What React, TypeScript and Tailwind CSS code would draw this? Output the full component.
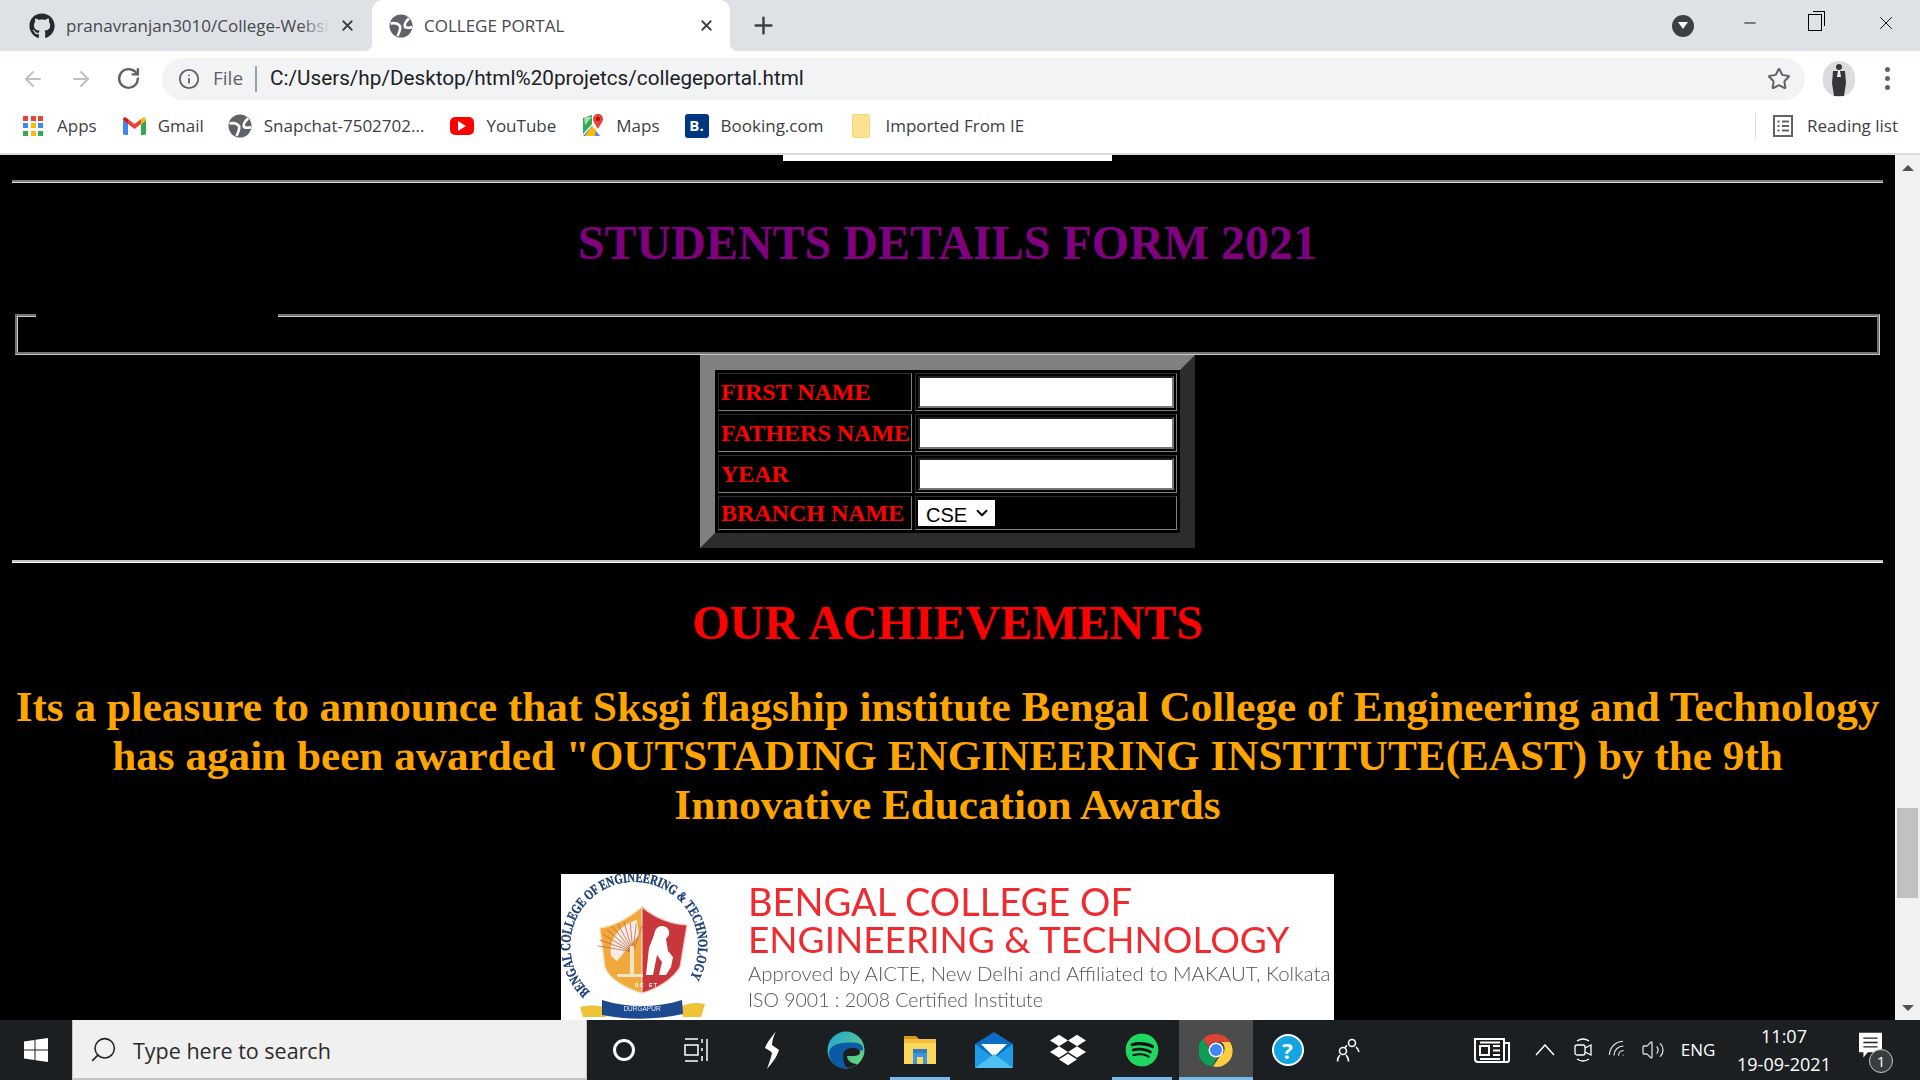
import { ArrowLeft, ArrowRight, ChevronDown, Info, Minus, Plus, RotateCw, Search, Star, Volume2, Wifi, X } from "lucide-react";
import { FaDropbox, FaGithub, FaSpotify } from "react-icons/fa";

function Globe({ size = 24 }: { size?: number }) {
  return (
    <svg width={size} height={size} viewBox="0 0 24 24" className="shrink-0">
      <circle cx="12" cy="12" r="11.500" fill="#5f6368" />
      <path d="M1.500 9.500C6 8.500 9 9.500 11 12c1 3-.5 6-2.500 10" fill="none" stroke="#fff" strokeWidth="2.600" />
      <path d="M20 4.500c-3 3-5 5-4 8.500 2 1 4.500 1 7 0" fill="none" stroke="#fff" strokeWidth="2.600" />
    </svg>
  );
}

function AppsIcon() {
  const colors = ["#ea4335", "#ea4335", "#ea4335", "#4285f4", "#fbbc05", "#4285f4", "#34a853", "#fbbc05", "#34a853"];
  return (
    <div className="grid grid-cols-3 gap-[2.5px] w-[20px] h-[20px] shrink-0">
      {colors.map((c, i) => (
        <span key={i} style={{ background: c }} />
      ))}
    </div>
  );
}

function GmailIcon() {
  return (
    <svg width="23" height="18" viewBox="0 0 23 18" className="shrink-0">
      <path d="M0 3v13c0 1 .7 2 2 2h3V7z" fill="#4285f4" />
      <path d="M23 3v13c0 1-.7 2-2 2h-3V7z" fill="#34a853" />
      <path d="M18 2v5l-6.500 5L5 7V2l6.500 5z" fill="#ea4335" />
      <path d="M0 3l5 4V2L3 .5C1.500-.5 0 .8 0 3z" fill="#c5221f" />
      <path d="M23 3l-5 4V2l2-1.500C21.500-.5 23 .8 23 3z" fill="#fbbc05" />
    </svg>
  );
}

function MapsIcon() {
  return (
    <svg width="22" height="24" viewBox="0 0 22 24" className="shrink-0">
      <path d="M1 4l9-3v9L1 20z" fill="#34a853" />
      <path d="M1 22l9-10 8 10z" fill="#4285f4" />
      <path d="M10 12l4 4-1 6H3z" fill="#fbbc05" />
      <path d="M2 3h8L3 11z" fill="#a8dab5" />
      <path d="M16 0c3 0 5 2 5 5 0 3-3 6-5 10-2-4-5-7-5-10 0-3 2-5 5-5z" fill="#ea4335" />
      <circle cx="16" cy="5" r="2" fill="#a50e0e" />
    </svg>
  );
}

function ChromeLogo() {
  return (
    <svg width="34" height="34" viewBox="0 0 34 34">
      <path d="M17 1a16 16 0 0 1 14 8H17a8 8 0 0 0-7.500 5L4 6A16 16 0 0 1 17 1z" fill="#db4437" />
      <path d="M4 6l7 12a7 7 0 0 0 7 6l-5 9.500A16 16 0 0 1 4 6z" fill="#0f9d58" />
      <path d="M31 9a16 16 0 0 1-17 24.500L21 23a8 8 0 0 0 1-14z" fill="#ffcd40" />
      <circle cx="17" cy="17" r="7.500" fill="#fff" />
      <circle cx="17" cy="17" r="6" fill="#4285f4" />
    </svg>
  );
}

function EdgeLogo() {
  return (
    <svg width="38" height="38" viewBox="0 0 38 38">
      <defs>
        <linearGradient id="edgeTop" x1="0" y1="0" x2="1" y2="1">
          <stop offset="0" stopColor="#1fa2d8" />
          <stop offset="1" stopColor="#6fdc6a" />
        </linearGradient>
      </defs>
      <circle cx="19" cy="19" r="18.500" fill="url(#edgeTop)" />
      <path d="M2 21c0 9 7 16.500 16 16.500 5 0 9-1.500 12-4-6 2-14-1-14-9 0-3 2-5 5-5h15c1-5-3-8-10-8C13 11.500 4 13 2 21z" fill="#0c59a4" />
      <path d="M16 24c0-4 4-7 9-7 5 0 8 2 8 4 0 3-3 4-7 4h-6c0 4 4 8 10 8-3 3-7 4.500-11 3-2-3-3-7-3-12z" fill="#1b1d1f" />
    </svg>
  );
}

function ExplorerIcon() {
  return (
    <svg width="32" height="32" viewBox="0 0 32 32">
      <path d="M0 2h12l3 3H0z" fill="#d99a1c" />
      <rect x="0" y="5" width="32" height="25" fill="#fbd75b" />
      <rect x="0" y="5" width="32" height="4" fill="#f5bd3c" />
      <rect x="9" y="17" width="14" height="13" fill="#3a96dd" />
      <rect x="13" y="23" width="6" height="7" fill="#fbd75b" />
      <rect x="9" y="15" width="14" height="4" fill="#2b7cc0" />
    </svg>
  );
}

function MailIcon() {
  return (
    <svg width="38" height="36" viewBox="0 0 38 36">
      <path d="M0 12L19 0l19 12v24H0z" fill="#0a6cc4" />
      <path d="M6 12h26L19 25z" fill="#fff" />
      <path d="M0 12l19 14 19-14v24H0z" fill="#1e9de6" />
      <path d="M0 36l19-14 19 14z" fill="#4fc0f2" />
    </svg>
  );
}

function ShieldCrest() {
  const rays = [-78, -66, -54, -42, -30, -18, -6, 6, 18, 30];
  return (
    <svg width="187" height="146" viewBox="0 0 187 146" className="shrink-0">
      <defs>
        <path id="ringPath" d="M29 118A64 64 0 1 1 128 105" />
      </defs>
      <text fontFamily="Liberation Serif, serif" fontWeight="bold" fontSize="14" fill="#1d3f77" stroke="#1d3f77" strokeWidth="0.400">
        <textPath href="#ringPath" textLength="285" lengthAdjust="spacingAndGlyphs">BENGAL COLLEGE OF ENGINEERING &amp; TECHNOLOGY</textPath>
      </text>
      <path d="M81 33C68 44 54 52 39 54l5 39c4 12 22 22 37 26z" fill="#f0a93a" stroke="#f8d9a8" strokeWidth="1.200" />
      <path d="M81 33c13 11 29 17 45 18l-7 42c-7 12-23 22-38 26z" fill="#c8373c" stroke="#f3c7b8" strokeWidth="1.200" />
      <path d="M76 46C60 50 47 64 50 82l6 5 22-26z" fill="#f8ece4" />
      {rays.map((a) => (
        <line key={a} x1="72" y1="78" x2={72 + 30 * Math.sin((a * Math.PI) / 180) - 6} y2={78 - 30 * Math.cos((a * Math.PI) / 180)} stroke="#c9654a" strokeWidth="0.800" />
      ))}
      <rect x="69" y="72" width="4" height="28" fill="#f2e6c8" />
      <path d="M56 100h26v3H56z" fill="#f2e6c8" />
      <path d="M101 52c5 0 8 4 7 9l-3 4 2 12 5 6-2 10-5 8h-7l3-13-5-7-4 20h-7l3-27 5-13c1-6 4-9 8-9z" fill="#fff" />
      <text x="74" y="113" fontFamily="Liberation Sans, sans-serif" fontSize="5" fontWeight="bold" fill="#fff">B C</text>
      <text x="88" y="113" fontFamily="Liberation Sans, sans-serif" fontSize="5" fontWeight="bold" fill="#fff">E T</text>
      <path d="M19 133c8-2 15-2 24 0l2 10H22z" fill="#f0c235" />
      <path d="M120 132c8-3 16-4 24-2l-4 13h-18z" fill="#f0c235" />
      <path d="M41 126c26 8 54 8 80 0l1 14c-26 6-56 6-81 1z" fill="#1d4a8e" />
      <text x="81" y="137" textAnchor="middle" fontFamily="Liberation Sans, sans-serif" fontSize="6.500" fill="#e8eefb">DURGAPUR</text>
    </svg>
  );
}

function Tray({ w, children }: { w: string; children: React.ReactNode }) {
  return <div className={`flex items-center justify-center h-full ${w}`}>{children}</div>;
}

function TaskCell({ children, active, line }: { children: React.ReactNode; active?: boolean; line?: boolean }) {
  return (
    <div className={`relative flex items-center justify-center w-[74px] h-full ${active ? "bg-[#4c4c4c]" : ""}`}>
      {children}
      {line && <span className={`absolute bottom-0 h-[3px] bg-[#76b9ed] ${active ? "inset-x-0" : "inset-x-[7px]"}`} />}
    </div>
  );
}

function BrowserChrome() {
  return (
    <div className="shrink-0 font-['Open_Sans',sans-serif] text-[#3c4043]">
      {/* tabs */}
      <div className="flex items-end h-[51px] bg-[#dee1e6]">
        <div className="flex items-center w-[372px] h-[51px] pl-[29px]">
          <FaGithub className="w-[26px] h-[26px] text-[#24292e] shrink-0" />
          <div className="relative w-[264px] ml-[11px] overflow-hidden whitespace-nowrap text-[17px] text-[#45494e]">
            pranavranjan3010/College-Websi
            <span className="absolute inset-y-0 right-0 w-[30px] bg-gradient-to-r from-transparent to-[#dee1e6]" />
          </div>
          <X className="w-[17px] h-[17px] ml-[9px] text-[#3c4043]" strokeWidth={2.500} />
        </div>
        <div className="relative flex items-center w-[358px] h-[51px] pl-[17px] bg-white rounded-t-[11px]">
          <span className="absolute bottom-0 -left-[8px] w-[8px] h-[8px] bg-[radial-gradient(circle_at_0_0,#dee1e6_8px,#ffffff_8.500px)]" />
          <span className="absolute bottom-0 -right-[8px] w-[8px] h-[8px] bg-[radial-gradient(circle_at_100%_0,#dee1e6_8px,#ffffff_8.500px)]" />
          <Globe />
          <span className="ml-[11px] text-[17px] text-[#45494e]">COLLEGE PORTAL</span>
          <X className="ml-auto mr-[15px] w-[17px] h-[17px] text-[#3c4043]" strokeWidth={2.500} />
        </div>
        <div className="flex items-center h-[51px] ml-[20px]">
          <Plus className="w-[27px] h-[27px] text-[#3c4043]" strokeWidth={2.200} />
        </div>
        <div className="flex items-center ml-auto h-[51px]">
          <div className="flex items-center justify-center w-[22px] h-[22px] rounded-full bg-[#3c4043]">
            <span className="w-0 h-0 border-x-[5px] border-x-transparent border-t-[7px] border-t-white" />
          </div>
          <div className="flex items-center justify-center w-[68px] ml-[22px] -mt-[6px]">
            <Minus className="w-[18px] h-[18px] text-black" strokeWidth={1.200} />
          </div>
          <div className="flex items-center justify-center w-[68px] -mt-[6px]">
            <div className="relative w-[14px] h-[17px] -ml-[6px] border border-black">
              <span className="absolute -top-[4px] -right-[4px] w-[12px] h-[15px] border-t border-r border-black" />
            </div>
          </div>
          <div className="flex items-center justify-center w-[68px] -mt-[6px]">
            <X className="w-[22px] h-[22px] text-black" strokeWidth={1} />
          </div>
        </div>
      </div>
      {/* address bar */}
      <div className="flex items-center h-[49px] pt-[6px] bg-white">
        <ArrowLeft className="ml-[21px] w-[24px] h-[24px] text-[#bdc1c6]" strokeWidth={2} />
        <ArrowRight className="ml-[24px] w-[24px] h-[24px] text-[#bdc1c6]" strokeWidth={2} />
        <RotateCw className="ml-[23px] w-[25px] h-[25px] text-[#5f6368]" strokeWidth={2.300} />
        <div className="flex items-center flex-1 h-[42px] ml-[21px] rounded-full bg-[#f1f3f4]">
          <Info className="ml-[16px] w-[22px] h-[22px] text-[#5f6368]" strokeWidth={2} />
          <span className="ml-[13px] text-[19px] text-[#5f6368]">File</span>
          <span className="ml-[12px] w-[2px] h-[26px] bg-[#9aa0a6]" />
          <span className="ml-[13px] text-[20.700px] text-[#202124] font-['Roboto',sans-serif]">C:/Users/hp/Desktop/html%20projetcs/collegeportal.html</span>
          <Star className="ml-auto mr-[14px] w-[24px] h-[24px] text-[#5f6368]" strokeWidth={2} />
        </div>
        <div className="flex items-center justify-center w-[32px] h-[36px] ml-[18px] rounded-full bg-[#dcdcdc] overflow-hidden">
          <svg width="20" height="34" viewBox="0 0 20 34">
            <circle cx="10" cy="5" r="3" fill="#3a3a3a" />
            <path d="M4 9h12l1 12-2 13H5L3 21z" fill="#33363b" />
            <path d="M9 9h2l1 6h-4z" fill="#eee" />
          </svg>
        </div>
        <div className="flex flex-col items-center gap-[4px] w-[10px] ml-[27px] mr-[28px]">
          <span className="w-[5px] h-[5px] rounded-full bg-[#5f6368]" />
          <span className="w-[5px] h-[5px] rounded-full bg-[#5f6368]" />
          <span className="w-[5px] h-[5px] rounded-full bg-[#5f6368]" />
        </div>
      </div>
      {/* bookmarks */}
      <div className="flex items-center h-[55px] pb-[2px] bg-white border-b-2 border-[#dadce0] text-[17px] text-[#3c4043]">
        <div className="flex items-center ml-[23px]">
          <AppsIcon />
          <span className="ml-[14px]">Apps</span>
        </div>
        <div className="flex items-center ml-[26px]">
          <GmailIcon />
          <span className="ml-[12px]">Gmail</span>
        </div>
        <div className="flex items-center ml-[24px]">
          <Globe />
          <span className="ml-[12px]">Snapchat-7502702...</span>
        </div>
        <div className="flex items-center ml-[26px]">
          <div className="flex items-center justify-center w-[24px] h-[18px] rounded-[5px] bg-[#ff0000]">
            <span className="w-0 h-0 border-y-[5px] border-y-transparent border-l-[8px] border-l-white" />
          </div>
          <span className="ml-[12px]">YouTube</span>
        </div>
        <div className="flex items-center ml-[26px]">
          <MapsIcon />
          <span className="ml-[12px]">Maps</span>
        </div>
        <div className="flex items-center ml-[25px]">
          <div className="flex items-center justify-center w-[24px] h-[24px] rounded-[3px] bg-[#003580] text-white font-bold text-[15px]">B.</div>
          <span className="ml-[12px]">Booking.com</span>
        </div>
        <div className="flex items-center ml-[29px]">
          <div className="w-[18px] h-[24px] rounded-[2px] bg-[#fde293] border border-[#f9d76e]" />
          <span className="ml-[15px]">Imported From IE</span>
        </div>
        <div className="flex items-center ml-auto mr-[22px] h-[26px]">
          <span className="w-px h-[26px] bg-[#dadce0]" />
          <svg width="20" height="22" viewBox="0 0 20 22" className="ml-[17px]" fill="none" stroke="#5f6368" strokeWidth="2">
            <rect x="1" y="1" width="18" height="20" />
            <path d="M4.500 6.500h2M9 6.500h7M4.500 11h2M9 11h7M4.500 15.500h2M9 15.500h7" />
          </svg>
          <span className="ml-[14px]">Reading list</span>
        </div>
      </div>
    </div>
  );
}

const labelCell = "border [border-style:inset] border-[#808080] py-[2px] pl-[2px] pr-[1px] text-left whitespace-nowrap text-[24px] leading-[28px] font-bold text-[#ff0000]";
const fieldCell = "border [border-style:inset] border-[#808080] p-[2px]";

function FieldRow({ label }: { label: string }) {
  return (
    <tr>
      <td className={labelCell}>{label}</td>
      <td className={fieldCell}>
        <input type="text" className="block w-[256px] h-[32px] bg-white border-2 [border-style:inset] border-[#767676]" />
      </td>
    </tr>
  );
}

function PageBody() {
  return (
    <div className="flex-1 min-w-0 bg-black overflow-hidden font-['Liberation_Serif',serif]">
      <div className="mx-auto w-[329px] h-[6px] bg-white" />
      <hr className="mt-[19px] mx-[12px] h-[3px] border-0 border-t-2 border-b border-solid border-t-[#808080] border-b-[#d8d8d8]" />
      <h1 className="mt-[32px] text-center text-[48px] leading-[55px] font-bold text-[#800080]">STUDENTS DETAILS FORM 2021</h1>
      <fieldset className="mt-[44px] mx-[15px] h-[41px] border-[3px] [border-style:groove] border-[#c8c8c8]">
        <legend className="ml-[18px] w-[242px] h-0" />
      </fieldset>
      <table className="mx-auto border-separate border-spacing-[3px] border-[15px] [border-style:outset] border-[#808080]">
        <tbody>
          <FieldRow label="FIRST NAME" />
          <FieldRow label="FATHERS NAME" />
          <FieldRow label="YEAR" />
          <tr>
            <td className={labelCell}>BRANCH NAME</td>
            <td className={fieldCell}>
              <div className="relative w-[77px] h-[26px]">
                <select className="block w-full h-full pl-[8px] pb-[2px] appearance-none bg-white text-black border-0 font-['Liberation_Sans',sans-serif] text-[20px]">
                  <option>CSE</option>
                </select>
                <ChevronDown className="absolute right-[4px] top-[4px] w-[18px] h-[18px] text-black pointer-events-none" strokeWidth={2.500} />
              </div>
            </td>
          </tr>
        </tbody>
      </table>
      <hr className="mt-[12px] mx-[12px] h-[3px] border-0 border-t-2 border-b border-solid border-t-[#c0c0c0] border-b-white" />
      <h2 className="mt-[32px] text-center text-[48px] leading-[55px] font-bold text-[#ff0000]">OUR ACHIEVEMENTS</h2>
      <p className="mt-[32px] mx-[12px] text-center text-[43.200px] leading-[49px] font-bold text-[#ffa500]">
        Its a pleasure to announce that Sksgi flagship institute Bengal College of Engineering and Technology has again been awarded "OUTSTADING ENGINEERING INSTITUTE(EAST) by the 9th Innovative Education Awards
      </p>
      <div className="flex mt-[45px] mx-auto w-[773px] h-[170px] bg-white overflow-hidden font-['Lato',sans-serif] blur-[0.4px]">
        <ShieldCrest />
        <div className="flex flex-col whitespace-nowrap">
          <div className="mt-[8px] text-[38px] leading-[38px] font-normal text-[#ef2b2f]">BENGAL COLLEGE OF</div>
          <div className="text-[37px] leading-[38px] font-normal text-[#ef2b2f]">ENGINEERING &amp; TECHNOLOGY</div>
          <div className="mt-[3px] text-[20.400px] leading-[24px] font-light text-[#555]">Approved by AICTE, New Delhi and Affiliated to MAKAUT, Kolkata</div>
          <div className="mt-[3px] text-[19.500px] leading-[24px] font-light text-[#555]">ISO 9001 : 2008 Certified Institute</div>
        </div>
      </div>
    </div>
  );
}

function Scrollbar() {
  return (
    <div className="flex flex-col items-center w-[25px] bg-[#f1f1f1]">
      <span className="mt-[10px] w-0 h-0 border-x-[6px] border-x-transparent border-b-[6px] border-b-[#505050]" />
      <div className="mt-[637px] w-[21px] h-[90px] bg-[#c1c1c1]" />
      <span className="mt-[107px] w-0 h-0 border-x-[6px] border-x-transparent border-t-[6px] border-t-[#505050]" />
    </div>
  );
}

function Taskbar() {
  return (
    <div className="flex items-center shrink-0 h-[60px] bg-[#1c1f22] font-['Open_Sans',sans-serif] text-white">
      <div className="flex items-center justify-center w-[72px] h-full">
        <svg width="24" height="24" viewBox="0 0 24 24" fill="#fff">
          <path d="M0 3.500L10.500 2v9.500H0zM11.500 1.800L24 0v11.500H11.500zM0 12.500h10.500V22L0 20.500zM11.500 12.500H24V24l-12.500-1.800z" />
        </svg>
      </div>
      <div className="flex items-center w-[515px] h-full pl-[16px] bg-[#f0f0f0] border-b-2 border-x border-[#c4c4c4] text-[#2b2b2b]">
        <Search className="w-[29px] h-[29px] -scale-x-100 text-[#222]" strokeWidth={1.300} />
        <span className="ml-[15px] pt-[5px] text-[21.500px]">Type here to search</span>
      </div>
      <TaskCell>
        <span className="w-[22px] h-[22px] rounded-full border-[3px] border-white" />
      </TaskCell>
      <TaskCell>
        <svg width="26" height="24" viewBox="0 0 26 24" fill="none" stroke="#fff" strokeWidth="1.500" className="-ml-[5px]">
          <path d="M2 1h13M2 23h13M2 7h13v10H2zM19 1v4M19 10v3M19 18v5M24 1v22" />
        </svg>
      </TaskCell>
      <TaskCell>
        <svg width="18" height="38" viewBox="0 0 18 38" fill="#fff">
          <path d="M13 0C9 6 4 11 2 17c3 2 6 3 7 5-1 5-3 10-5 16 5-6 10-12 12-19-2-2-5-3-7-5 0-5 2-9 4-14z" />
        </svg>
      </TaskCell>
      <TaskCell>
        <EdgeLogo />
      </TaskCell>
      <TaskCell line>
        <ExplorerIcon />
      </TaskCell>
      <TaskCell>
        <MailIcon />
      </TaskCell>
      <TaskCell>
        <FaDropbox className="w-[36px] h-[36px] text-white" />
      </TaskCell>
      <TaskCell line>
        <FaSpotify className="w-[34px] h-[34px] text-[#1ed760] bg-[#111] rounded-full" />
      </TaskCell>
      <TaskCell active line>
        <ChromeLogo />
      </TaskCell>
      <TaskCell>
        <div className="flex items-center justify-center w-[32px] h-[32px] -ml-[5px] rounded-full bg-[#12a5e0] border-2 border-white text-white text-[22px] font-bold leading-none">?</div>
      </TaskCell>
      <div className="flex items-center justify-center w-[42px] h-full">
        <svg width="24" height="24" viewBox="0 0 24 24" fill="none" stroke="#fff" strokeWidth="1.600">
          <circle cx="16" cy="5" r="3.500" />
          <circle cx="7" cy="13" r="3.500" />
          <path d="M20 9c1.500 1.500 2.500 3 3 5M11 7.500C10 8 9.500 9 9 9.500M1.500 23.500c0-3 1-5 2.500-6.500M12.500 23.500c0-3-1-5-2.500-6.500" />
        </svg>
      </div>
      <div className="flex items-center ml-auto h-full">
        <Tray w="w-[60px]">
          <svg width="36" height="25" viewBox="0 0 36 25" fill="none" stroke="#fff" strokeWidth="2">
            <path d="M1 1h29v23H4a3 3 0 0 1-3-3zM30 5h5v17a2 2 0 0 1-2 2h-3" />
            <path d="M6 8h9v9H6zM19 8h7M19 12.500h7M19 17h7M6 21h20M6 4.500h20" />
          </svg>
        </Tray>
        <Tray w="w-[46px]">
          <svg width="20" height="12" viewBox="0 0 20 12" fill="none" stroke="#fff" strokeWidth="1.500">
            <path d="M1 11l9-10 9 10" />
          </svg>
        </Tray>
        <Tray w="w-[30px]">
          <svg width="18" height="24" viewBox="0 0 18 24" fill="none" stroke="#fff" strokeWidth="1.300">
            <path d="M3 3Q9-1 15 3M3 21q6 4 12 0" />
            <rect x="1" y="7" width="10" height="10" rx="2" />
            <path d="M11 10l6-3v10l-6-3" />
          </svg>
        </Tray>
        <Tray w="w-[40px]">
          <Wifi className="w-[22px] h-[22px] text-[#ddd] -rotate-45" strokeWidth={1.300} />
        </Tray>
        <Tray w="w-[30px]">
          <Volume2 className="w-[24px] h-[24px] text-[#ddd]" strokeWidth={1.300} />
        </Tray>
        <Tray w="w-[60px]">
          <span className="text-[17px]">ENG</span>
        </Tray>
        <div className="flex flex-col items-center justify-center w-[112px] h-full text-[18px] leading-[28px]">
          <span>11:07</span>
          <span>19-09-2021</span>
        </div>
        <div className="relative flex items-center w-[80px] h-full pl-[19px]">
          <svg width="23" height="28" viewBox="0 0 26 30" className="-mt-[8px]">
            <path d="M0 0h26v22H10l-5 6v-6H0z" fill="#fff" />
            <path d="M5 6h16M5 11h16M5 16h16" stroke="#222" strokeWidth="1.500" />
          </svg>
          <span className="absolute left-[29px] bottom-[7px] flex items-center justify-center w-[24px] h-[24px] rounded-full bg-[#3a3d40] border border-[#c8c8c8] text-[15px]">1</span>
        </div>
      </div>
    </div>
  );
}

export default function App() {
  return (
    <div className="flex flex-col h-screen overflow-hidden bg-black">
      <BrowserChrome />
      <div className="flex flex-1 min-h-0">
        <PageBody />
        <Scrollbar />
      </div>
      <Taskbar />
    </div>
  );
}
